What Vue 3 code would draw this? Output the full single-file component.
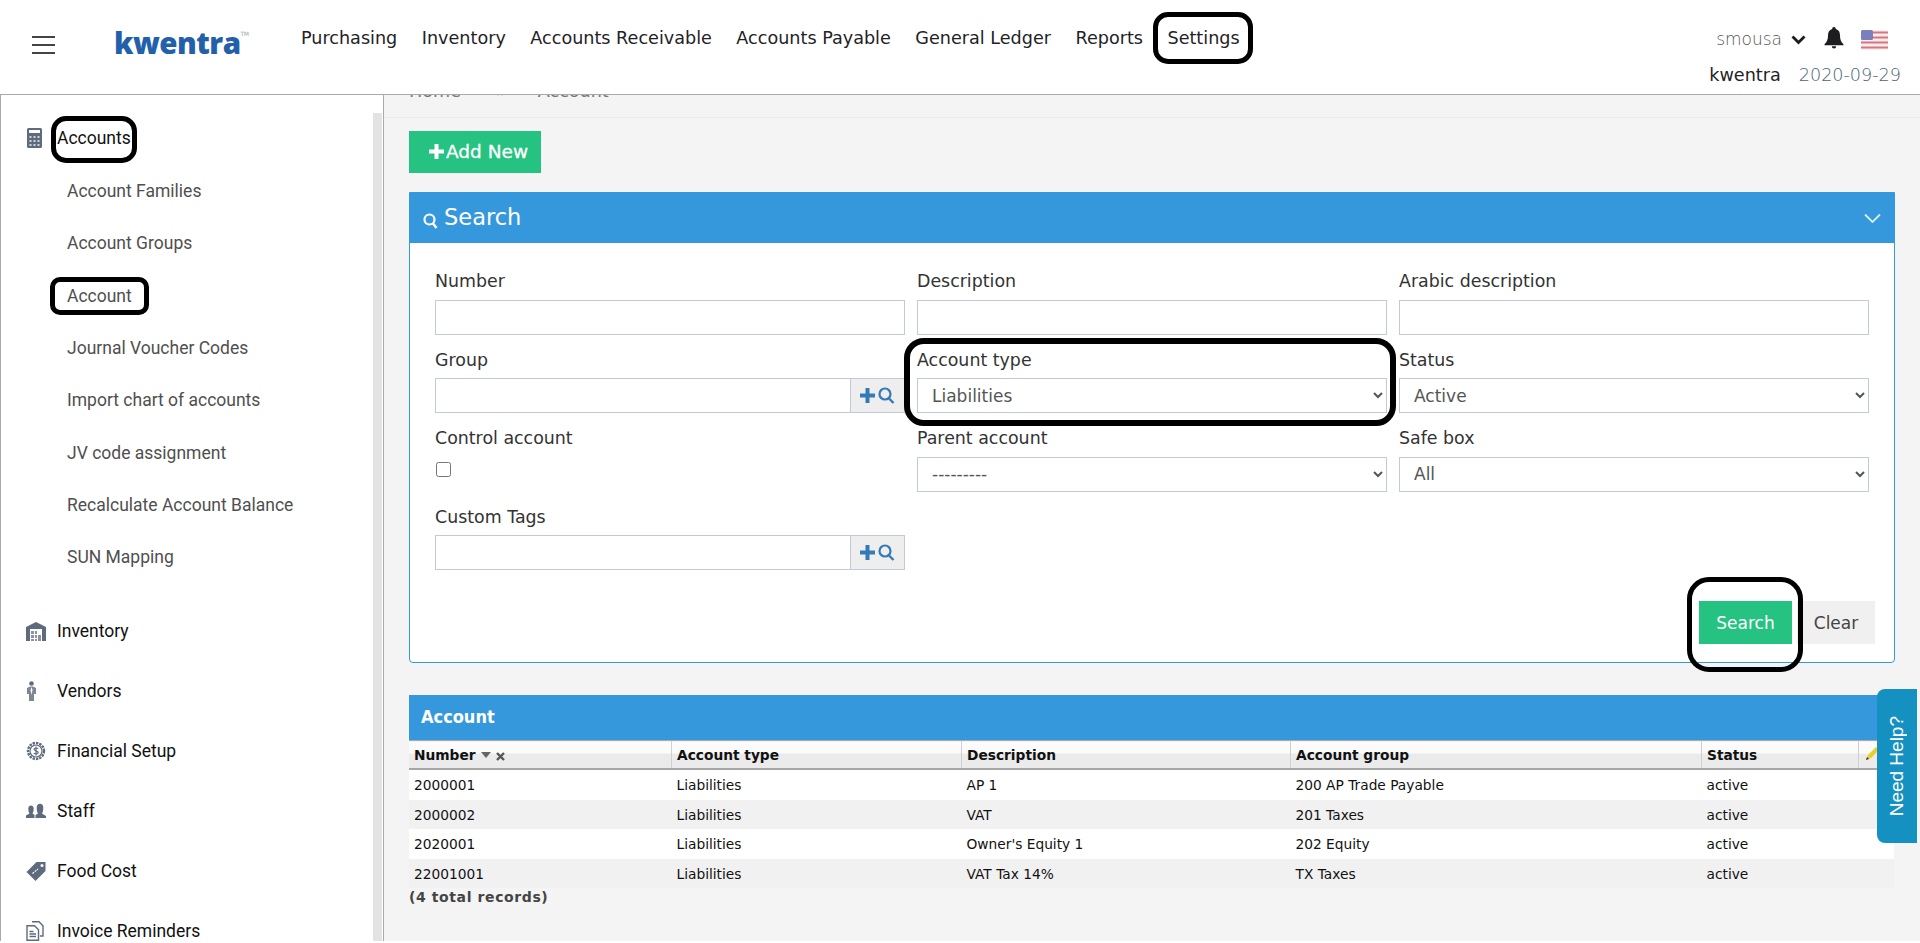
<script setup>
const nav = ['Purchasing', 'Inventory', 'Accounts Receivable', 'Accounts Payable', 'General Ledger', 'Reports', 'Settings']
const subs = ['Account Families', 'Account Groups', 'Account', 'Journal Voucher Codes', 'Import chart of accounts', 'JV code assignment', 'Recalculate Account Balance', 'SUN Mapping']
const rows = [
  ['2000001', 'Liabilities', 'AP 1', '200 AP Trade Payable', 'active'],
  ['2000002', 'Liabilities', 'VAT', '201 Taxes', 'active'],
  ['2020001', 'Liabilities', "Owner's Equity 1", '202 Equity', 'active'],
  ['22001001', 'Liabilities', 'VAT Tax 14%', 'TX Taxes', 'active'],
]
const boxes = ['b-settings', 'b-accounts', 'b-account', 'b-type', 'b-search']
</script>

<template>
  <div class="root">
    <header class="top">
      <div class="burger"><i></i><i></i><i></i></div>
      <div class="logo">kwentra<sup>TM</sup></div>
      <nav class="nav"><a v-for="n in nav" :key="n">{{ n }}</a></nav>
      <div class="user">
        <div class="u1">
          <span class="uname">smousa</span>
          <svg class="chev" width="15" height="10" viewBox="0 0 15 10"><path d="M1.5 1.5 7.5 7.5 13.5 1.5" fill="none" stroke="#1c1c1c" stroke-width="2.8"/></svg>
          <svg class="bell" width="20" height="22" viewBox="0 0 20 22"><path d="M10 0c1.2 0 1.8.8 1.8 1.9C14.800 2.700 16 5.200 16 8.500c0 4 1 6.500 3.500 8.800v1H.5v-1C3 15 4 12.500 4 8.500 4 5.200 5.200 2.700 8.200 1.900 8.200.8 8.800 0 10 0Z" fill="#1d1d1f"/><path d="M7.800 19.200a2.200 2.200 0 0 0 4.400 0Z" fill="#1d1d1f"/></svg>
          <svg class="flag" width="27" height="20" viewBox="0 0 27 20">
            <rect width="27" height="20" rx="2" fill="#f6eeee"/>
            <path d="M0 2.500h27M0 7.500h27M0 12.500h27M0 17.500h27" stroke="#d9747c" stroke-width="2.200"/>
            <rect width="12" height="10" rx="1.500" fill="#7a80bd"/>
          </svg>
        </div>
        <div class="u2"><span class="co">kwentra</span><span class="date">2020-09-29</span></div>
      </div>
    </header>

    <div class="body">
      <aside class="side">
        <div class="menu">
          <div class="mi first">
            <svg class="ic" width="20" height="20" viewBox="0 0 20 20"><rect x="1" y="0" width="15" height="20" rx="1.500" fill="#5f6b7c"/><rect x="3" y="2" width="11" height="3" fill="#fff"/><path d="M3.500 8h2v2h-2zM7.500 8h2v2h-2zM11.500 8h2v2h-2zM3.500 12h2v2h-2zM7.500 12h2v2h-2zM11.500 12h2v2h-2zM3.500 16h2v2h-2zM7.500 16h2v2h-2zM11.500 16h2v2h-2z" fill="#cfd4da"/></svg>
            <span>Accounts</span>
          </div>
          <div class="subs"><a v-for="s in subs" :key="s">{{ s }}</a></div>
          <div class="mi inv">
            <svg class="ic" width="20" height="20" viewBox="0 0 20 20"><path d="M0 6 10 1l10 5v14H0Z" fill="#5f6b7c"/><rect x="4" y="8" width="12" height="12" fill="#fff"/><path d="M5 10h3v3H5zM9 10h2v3H9zM5 14h3v3H5zM9 14h2v3H9zM12 14h3v6h-3zM5 18h3v2H5zM9 18h2v2H9z" fill="#8a94a1"/></svg>
            <span>Inventory</span>
          </div>
          <div class="mi">
            <svg class="ic" width="20" height="20" viewBox="0 0 20 20"><circle cx="5.500" cy="2.500" r="2.300" fill="#5f6b7c"/><path d="M1 7 4 5.500h3L10 7v6H8v7H3v-7H1Z" fill="#7d8794"/><path d="M5.500 6 6.500 9 5.500 14 4.500 9Z" fill="#fff"/></svg>
            <span>Vendors</span>
          </div>
          <div class="mi">
            <svg class="ic" width="20" height="20" viewBox="0 0 20 20"><circle cx="10" cy="10" r="8" fill="none" stroke="#5f6b7c" stroke-width="2.400" stroke-dasharray="2.400 1"/><circle cx="10" cy="10" r="6" fill="none" stroke="#5f6b7c" stroke-width="1.200"/><path d="M12.200 7.800c-.6-1-3.800-1.200-4.200.4-.4 2 4.400 1.400 4.200 3.600-.2 1.600-3.600 1.400-4.400.3M10 5.500v9" fill="none" stroke="#5f6b7c" stroke-width="1.200"/></svg>
            <span>Financial Setup</span>
          </div>
          <div class="mi">
            <svg class="ic" width="20" height="15" viewBox="0 0 20 15"><path d="M0 15v-2.500l3.500-2C2.500 9 2.300 7 2.300 5.500 2.300 3.500 3.500 2.500 5 2.500s2.700 1 2.700 3c0 1.500-.2 3.500-1.200 5l2 1.200V15Z" fill="#5f6b7c"/><path d="M9.500 15v-3L12 10.500C11 9 10.700 6.500 10.700 4.500 10.700 2 12 .7 14 .7s3.300 1.300 3.300 3.800c0 2-.3 4.500-1.300 6l4 2.500V15Z" fill="#5f6b7c"/></svg>
            <span>Staff</span>
          </div>
          <div class="mi">
            <svg class="ic" width="20" height="20" viewBox="0 0 20 20"><path d="M10.500 1H19.500V10L9.500 20 .5 11Z" fill="#5f6b7c"/><circle cx="16" cy="4.500" r="1.500" fill="#fff"/><path d="M6.500 12.500 12 8" stroke="#fff" stroke-width="1.200" stroke-dasharray="2 1"/></svg>
            <span>Food Cost</span>
          </div>
          <div class="mi">
            <svg class="ic" width="20" height="20" viewBox="0 0 20 20"><path d="M6 .7h7l4 4V15h-3" fill="none" stroke="#5f6b7c" stroke-width="1.400"/><path d="M1 4.700h7.500l4 4V19.300H1Z" fill="#fff" stroke="#5f6b7c" stroke-width="1.400"/><path d="M3.500 10.500h4M3.500 13h6.500M3.500 15.500h6.500" stroke="#5f6b7c" stroke-width="1.400"/></svg>
            <span>Invoice Reminders</span>
          </div>
        </div>
        <div class="track"></div>
      </aside>

      <main class="main">
        <div class="crumbs"><span>Home</span><span class="sep">»</span><span>Account</span></div>
        <button class="add">
          <svg width="15" height="15" viewBox="0 0 15 15"><path d="M5.500 0h4v5.500H15v4H9.500V15h-4V9.500H0v-4h5.500Z" fill="#fff"/></svg>
          <span>Add New</span>
        </button>

        <section class="panel">
          <div class="phead">
            <svg width="15" height="16" viewBox="0 0 15 16"><circle cx="6.500" cy="6.500" r="5" fill="none" stroke="#fff" stroke-width="2.200"/><path d="M10 10.500 13.500 15" stroke="#fff" stroke-width="2.400"/></svg>
            <span class="ptitle">Search</span>
            <svg class="pchev" width="17" height="11" viewBox="0 0 17 11"><path d="M1 1.500 8.500 9 16 1.500" fill="none" stroke="#dcebf8" stroke-width="1.800"/></svg>
          </div>
          <div class="pbody">
            <div class="grid">
              <div class="fg"><label>Number</label><input class="ctl" /></div>
              <div class="fg"><label>Description</label><input class="ctl" /></div>
              <div class="fg"><label>Arabic description</label><input class="ctl" /></div>

              <div class="fg low"><label>Group</label>
                <div class="ig"><input class="ctl" /><span class="addon">
                  <svg width="15" height="15" viewBox="0 0 15 15"><path d="M5.500 0h4v5.500H15v4H9.500V15h-4V9.500H0v-4h5.500Z" fill="#337ab7"/></svg>
                  <svg width="17" height="17" viewBox="0 0 17 17"><circle cx="7" cy="7" r="5.500" fill="none" stroke="#337ab7" stroke-width="2.200"/><path d="M11 11.500 15.500 16" stroke="#337ab7" stroke-width="2.400"/></svg>
                </span></div>
              </div>
              <div class="fg low"><label>Account type</label><select class="ctl"><option>Liabilities</option></select></div>
              <div class="fg low"><label>Status</label><select class="ctl"><option>Active</option></select></div>

              <div class="fg"><label>Control account</label><input type="checkbox" class="chk" /></div>
              <div class="fg"><label>Parent account</label><select class="ctl"><option>---------</option></select></div>
              <div class="fg"><label>Safe box</label><select class="ctl"><option>All</option></select></div>

              <div class="fg low"><label>Custom Tags</label>
                <div class="ig"><input class="ctl" /><span class="addon">
                  <svg width="15" height="15" viewBox="0 0 15 15"><path d="M5.500 0h4v5.500H15v4H9.500V15h-4V9.500H0v-4h5.500Z" fill="#337ab7"/></svg>
                  <svg width="17" height="17" viewBox="0 0 17 17"><circle cx="7" cy="7" r="5.500" fill="none" stroke="#337ab7" stroke-width="2.200"/><path d="M11 11.500 15.500 16" stroke="#337ab7" stroke-width="2.400"/></svg>
                </span></div>
              </div>
            </div>
            <div class="actions">
              <button class="go">Search</button>
              <button class="clear">Clear</button>
            </div>
          </div>
        </section>

        <section class="results">
          <div class="rhead">Account</div>
          <table class="tbl">
            <thead>
              <tr>
                <th>Number <i class="tri"></i><svg class="x" width="9" height="9" viewBox="0 0 9 9"><path d="M1 1 8 8M8 1 1 8" stroke="#555" stroke-width="2.400"/></svg></th>
                <th>Account type</th><th>Description</th><th>Account group</th><th>Status</th>
                <th class="pen"><svg width="14" height="14" viewBox="0 0 14 14"><path d="M0 14 2 9 10 1 13 4 5 12Z" fill="#e6cf2e"/><path d="M0 14 1 11 3 13Z" fill="#333"/></svg></th>
              </tr>
            </thead>
            <tbody>
              <tr v-for="r in rows" :key="r[0]">
                <td v-for="(c, i) in r" :key="i">{{ c }}</td><td></td>
              </tr>
            </tbody>
          </table>
          <div class="total">(4 total records)</div>
        </section>
      </main>
    </div>

    <div v-for="b in boxes" :key="b" class="mark" :class="b"></div>
    <div class="help"><span>Need Help?</span></div>
  </div>
</template>

<style>
html, body { margin: 0; background: #fff; overflow: hidden; }
</style>

<style scoped>
.root { position: relative; height: 941px; display: flex; flex-direction: column; font-family: "DejaVu Sans", sans-serif; color: #333; overflow: hidden; }
.top { height: 94px; flex: none; border-bottom: 1px solid #aaa; background: #fff; display: flex; position: relative; z-index: 2; }
.burger { width: 23px; margin: 36px 0 0 32px; display: flex; flex-direction: column; gap: 6px; }
.burger i { display: block; height: 2px; background: #444; }
.logo { width: 186px; margin-left: 59px; padding-top: 21px; font: 800 29.500px/44px "Open Sans", sans-serif; color: #2360ab; letter-spacing: -.5px; box-sizing: border-box; }
.logo sup { font: 400 6px/6px "DejaVu Sans", sans-serif; color: #9aa; vertical-align: 18px; }
.nav { display: flex; gap: 24.500px; padding-top: 27px; font-size: 17.600px; line-height: 22px; color: #1f2226; position: absolute; left: 301px; top: 0; white-space: nowrap; }
.user { margin-left: auto; padding-right: 19px; display: flex; flex-direction: column; align-items: flex-end; }
.u1 { display: flex; align-items: center; height: 26px; margin-top: 26px; padding-right: 13px; }
.uname { font-size: 17px; font-weight: 200; color: #555; }
.chev { margin-left: 9px; margin-top: 2px; }
.bell { margin-left: 18px; margin-top: -2px; }
.flag { margin-left: 17px; margin-top: 2px; }
.u2 { display: flex; gap: 18px; margin-top: 11px; font-size: 17.600px; line-height: 24px; }
.co { color: #1f2226; }
.date { font-weight: 200; color: #4d6478; }

.body { flex: 1; display: flex; min-height: 0; }
.side { width: 384px; flex: none; box-sizing: border-box; border-left: 1px solid #aaa; border-right: 1px solid #aaa; background: #fff; display: flex; font-family: Roboto, sans-serif; font-size: 17.500px; overflow: hidden; }
.menu { flex: 1; padding-left: 25px; }
.track { width: 9px; margin-top: 18px; margin-right: 1px; background: #e3e3e3; }
.mi { height: 60px; display: flex; align-items: center; color: #111; white-space: nowrap; }
.mi.first { height: 54px; margin-top: 16px; }
.mi.inv { margin-top: 17px; }
.ic { width: 20px; flex: none; margin-right: 11px; }
.subs a { display: flex; align-items: center; height: 52.330px; padding-left: 41px; color: #4f4f4f; }

.main { flex: 1; min-width: 0; background: #f4f4f4; padding: 0 25px; position: relative; }
.crumbs { margin: -12px -25px 0; padding: 0 25px; height: 34px; border-bottom: 1px solid #ebebeb; display: flex; font-size: 17.600px; line-height: 16px; color: #777; }
.sep { margin: 0 31px 0 35px; }
.add { display: flex; align-items: center; gap: 2px; height: 42px; width: 132px; margin-top: 13px; padding: 0 0 2px 20px; border: 0; background: #26c281; color: #fff; font: 18.500px "DejaVu Sans", sans-serif; -webkit-text-stroke: .3px #fff; }
.panel { margin-top: 19px; width: 1486px; box-sizing: border-box; border: 1px solid #3598dc; border-radius: 0 0 4px 4px; background: #fff; }
.phead { height: 50px; background: #3598dc; display: flex; align-items: center; color: #fff; padding: 0 13px; }
.phead > svg:first-child { margin-top: 5px; }
.ptitle { font-size: 22.500px; margin-left: 6px; margin-top: -2px; }
.pchev { margin-left: auto; margin-right: 0; }
.pbody { padding: 26px 25px 18px; }
.grid { display: grid; grid-template-columns: repeat(3, 470px); column-gap: 12px; grid-auto-rows: 78.330px; }
.fg label { display: block; height: 22px; padding-top: 1px; margin-bottom: 8px; font-size: 17.400px; line-height: 22px; color: #333; }
.fg.low label { padding-top: 2px; margin-bottom: 7px; }
.ctl { display: block; width: 100%; height: 35px; box-sizing: border-box; border: 1px solid #c2cad8; background: #fff; font: 17px "DejaVu Sans", sans-serif; color: #555; padding: 0 10px; border-radius: 0; }
.ig { display: flex; width: 470px; }
.ig .ctl { flex: 1; min-width: 0; }
.addon { width: 54px; height: 35px; flex: none; box-sizing: border-box; border: 1px solid #c2cad8; border-left: 0; background: #eee; display: flex; align-items: center; justify-content: center; gap: 3px; }
.chk { display: block; width: 15px; height: 15px; margin: 0 0 0 1px; position: relative; top: 5px; }
.actions { display: flex; justify-content: flex-end; gap: 5px; margin-top: 19px; margin-right: -6px; }
.actions button { height: 43px; border: 0; font: 17px "DejaVu Sans", sans-serif; }
.go { width: 93px; background: #26c281; color: #fff; }
.clear { width: 78px; background: #f0f0f0; color: #444; }

.results { margin-top: 32px; width: 1485px; }
.rhead { height: 45px; background: #3598dc; color: #fff; font: 700 18px/43px "DejaVu Sans Condensed", "DejaVu Sans", sans-serif; padding-left: 12px; }
.tbl { width: 100%; border-collapse: collapse; table-layout: fixed; font-size: 13.750px; color: #111; }
.tbl th { height: 27px; padding: 0 0 0 5px; text-align: left; font-weight: 700; color: #111; white-space: nowrap; border-top: 1px solid #aaa; border-bottom: 2px solid #a6a6a6; border-left: 1px solid #d0d0d0; background: linear-gradient(#fbfbfb 0 45%, #ebebeb 45%); }
.tbl th:first-child { border-left: 0; width: 257px; }
.tbl th:nth-child(2) { width: 284px; }
.tbl th:nth-child(3) { width: 323px; }
.tbl th:nth-child(4) { width: 405px; }
.tbl th:nth-child(5) { width: 151px; }
.tbl th.pen { padding-left: 7px; }
.tbl td { height: 29.500px; padding: 0 0 0 5px; background: #fff; white-space: nowrap; }
.tbl tr:nth-child(even) td { background: #f1f1f1; }
.tri { display: inline-block; width: 0; height: 0; border: 5px solid transparent; border-top: 6px solid #666; border-bottom: 0; vertical-align: 2px; margin-left: 1px; }
.x { margin-left: 5px; vertical-align: -1px; }
.total { font-size: 14px; font-weight: 700; letter-spacing: .6px; line-height: 18px; color: #444; }

.mark { position: absolute; box-sizing: border-box; border: 5px solid #000; border-radius: 15px; z-index: 3; }
.b-settings { left: 1153px; top: 12px; width: 100px; height: 52px; }
.b-accounts { left: 51px; top: 116px; width: 86px; height: 47px; }
.b-account { left: 50px; top: 277px; width: 99px; height: 38px; border-radius: 10px; }
.b-type { left: 904px; top: 338px; width: 492px; height: 88px; border-radius: 20px; border-width: 6px; }
.b-search { left: 1687px; top: 577px; width: 116px; height: 95px; border-radius: 22px; }
.help { position: absolute; left: 1877px; top: 689px; width: 40px; height: 154px; background: #1591c1; border-radius: 8px 0 0 8px; display: flex; align-items: center; justify-content: center; z-index: 4; }
.help span { writing-mode: vertical-rl; transform: rotate(180deg); color: #fff; font: 19px "Liberation Sans", sans-serif; }
</style>
